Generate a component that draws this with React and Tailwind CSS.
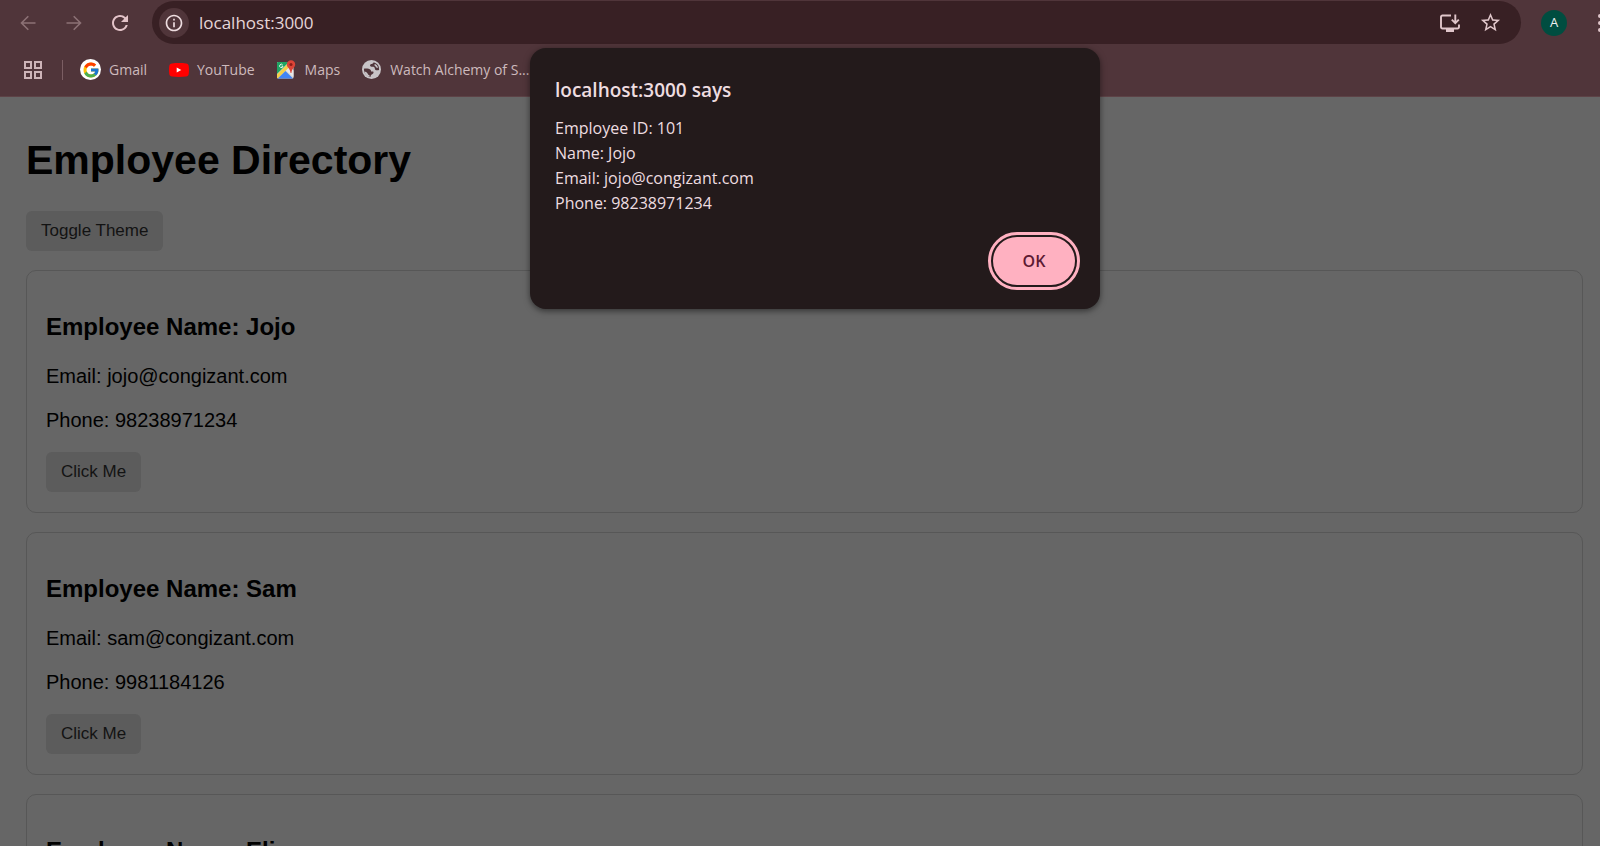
import React from "react";
import { MdInfoOutline, MdOutlineGridView, MdRefresh, MdStarBorder } from "react-icons/md";
import { FcGoogle } from "react-icons/fc";

const employees = [
  { name: "Jojo", email: "jojo@congizant.com", phone: "98238971234" },
  { name: "Sam", email: "sam@congizant.com", phone: "9981184126" },
  { name: "Eli" },
];

function Arrow({ flip }) {
  return (
    <svg
      viewBox="0 0 16 16"
      className={flip ? "size-4 rotate-180" : "size-4"}
      fill="none"
      stroke="currentColor"
      strokeWidth="1.6"
    >
      <path d="M15.5 8H1.8M8.300 1.200 1.500 8l6.800 6.800" />
    </svg>
  );
}

function InstallIcon() {
  return (
    <svg viewBox="0 0 20 18" className="h-[18px] w-5" fill="none" stroke="currentColor" strokeWidth="1.9">
      <path d="M11 1.500H2.400A1.400 1.400 0 0 0 1 2.900v10.200a1.400 1.400 0 0 0 1.400 1.400h15.200a1.400 1.400 0 0 0 1.400-1.400v-2.600" />
      <path d="M15.300.5v8.300M11.800 5.600l3.500 3.500 3.500-3.500" />
      <path d="M6 15h8v3H6z" fill="currentColor" stroke="none" />
    </svg>
  );
}

function GlobeIcon() {
  return (
    <svg viewBox="0 0 20 20" className="size-[19px] shrink-0">
      <circle cx="10" cy="10" r="10" fill="#c8c4c7" />
      <path
        fill="#50353a"
        d="M2 9.200c1.600-.5 3.500-.2 5 .1 1.800.4 2.500 1.600 2.600 2.900h1.600c.8 0 1 .6.9 1.300-.2 1.400-1.600 1.600-2.600 2.300-.5.5-.2 1.600-.7 2A8 8 0 0 1 2 9.200Z"
      />
      <path fill="#c8c4c7" d="M2.300 12c2 .2 3.200 1 3.700 2.400.3 1 .9 1.300 2 1.600l-.3 1.500A7.800 7.800 0 0 1 2.300 12Z" />
      <path
        fill="#50353a"
        d="M12.300 2.300c-.2 1.400-1.500 1.600-2.700 2-1.300.6-1.600 2-.3 2.500 1.500.5 2.800-.3 3.700.9.800 1.200.3 2.600 1.800 3.100 1.100.3 2.100-.1 3.200-.2A8 8 0 0 0 12.300 2.300Z"
      />
      <path fill="#c8c4c7" d="M13.800 4.200c1.700.8 2.700 2.200 3 4-1 .3-1.800.1-2.300-1-.5-1-1-1.600-1.800-1.900z" />
    </svg>
  );
}

function YouTubeIcon() {
  return (
    <svg viewBox="0 0 20 14" className="h-[14px] w-5">
      <path
        fill="#f00"
        d="M3 .4C7 0 13 0 17 .4c1.700.2 2.500 1 2.700 2.600.4 2.700.4 5.300 0 8-.2 1.600-1 2.400-2.700 2.600-4 .4-10 .4-14 0C1.300 13.400.5 12.600.3 11c-.4-2.700-.4-5.300 0-8C.5 1.400 1.300.6 3 .4Z"
      />
      <path fill="#fff" d="M7.700 4.500v5L12.300 7z" />
    </svg>
  );
}

function MapsIcon() {
  return (
    <svg viewBox="0 0 20 20" className="size-5">
      <rect x="1" y="2" width="16.500" height="16.500" rx="1" fill="#d8d8d8" />
      <path fill="#1fa463" d="M2 2h11L1 14V3a1 1 0 0 1 1-1Z" />
      <path fill="#f4d04a" d="M1 14.500 12.500 3l1.500 3.500L2.200 18.300A1.200 1.200 0 0 1 1 17z" />
      <path fill="#e8e8e8" d="m10 10.500 4-4 3.500 4V17z" />
      <path fill="#4285f4" d="m9.500 11 7.300 7.200a1.500 1.500 0 0 1-.8.300H2.500L2 18.300z" />
      <path
        fill="none"
        stroke="#e8f5e9"
        strokeWidth="1"
        d="M6.600 4.800a1.700 1.700 0 1 0 .4 1.400H5.500"
      />
      <path
        fill="#db4437"
        d="M15 .3a4.200 4.200 0 0 0-4.200 4.200c0 2.900 3.300 3.700 3.800 8.500h.8c.5-4.800 3.800-5.600 3.800-8.500A4.200 4.200 0 0 0 15 .3Z"
      />
      <circle cx="15" cy="4.500" r="1.500" fill="#8c1d18" />
    </svg>
  );
}

function Bookmark({ icon, children }) {
  return (
    <a href="#" className="flex shrink-0 items-center gap-2 text-sm leading-5 text-[#cdbabd]">
      <span className="flex w-[21px] justify-center">{icon}</span>
      {children}
    </a>
  );
}

function BrowserHeader() {
  return (
    <header className="shrink-0 overflow-hidden border-b border-[#5d4246] bg-[#50353a] font-['Open_Sans',sans-serif]">
      <div className="flex h-[45px] items-center pt-px pb-px">
        <nav className="flex shrink-0 items-center gap-[30px] pr-6 pl-5 text-[#8c7175]">
          <button aria-label="Back">
            <Arrow />
          </button>
          <button aria-label="Forward">
            <Arrow flip />
          </button>
          <button aria-label="Reload" className="-mx-1 text-[#e3c3c8]">
            <MdRefresh className="size-6" />
          </button>
        </nav>
        <div className="flex h-[43px] min-w-0 flex-1 items-center rounded-full bg-[#382024] pr-[19px] pl-[7px] text-[#e0c6ca]">
          <button
            aria-label="Site information"
            className="flex size-[30px] shrink-0 items-center justify-center rounded-full bg-[#50353a]"
          >
            <MdInfoOutline className="size-5 text-[#eedde0]" />
          </button>
          <input
            aria-label="Address"
            defaultValue="localhost:3000"
            className="ml-[10px] min-w-0 flex-1 bg-transparent text-[17px] text-[#e6d6d8] outline-none"
          />
          <div className="flex items-center gap-[19px]">
            <button aria-label="Install app">
              <InstallIcon />
            </button>
            <button aria-label="Bookmark this page">
              <MdStarBorder className="size-[23px]" />
            </button>
          </div>
        </div>
        <button
          aria-label="Profile"
          className="mr-[31px] ml-5 flex size-[26px] shrink-0 items-center justify-center rounded-full bg-[#004d40] text-[13px] text-[#f0f0f0]"
        >
          A
        </button>
        <button aria-label="Menu" className="w-[2px] shrink-0 overflow-hidden text-[#e0c6ca]">
          <svg viewBox="0 0 4 20" className="h-5 w-1" fill="currentColor">
            <circle cx="2" cy="3" r="2" />
            <circle cx="2" cy="10" r="2" />
            <circle cx="2" cy="17" r="2" />
          </svg>
        </button>
      </div>
      <div className="flex h-[51px] items-center pb-[2px] pl-[21px]">
        <button aria-label="All bookmarks" className="shrink-0 text-[#cdb4b8]">
          <MdOutlineGridView className="size-6" />
        </button>
        <span className="mx-[17px] h-5 w-px shrink-0 bg-[#7b5e63]" />
        <div className="flex items-center gap-[21px]">
          <Bookmark
            icon={
              <span className="flex size-[21px] items-center justify-center rounded-full bg-white">
                <FcGoogle className="size-[18px]" />
              </span>
            }
          >
            Gmail
          </Bookmark>
          <Bookmark icon={<YouTubeIcon />}>YouTube</Bookmark>
          <Bookmark icon={<MapsIcon />}>Maps</Bookmark>
          <Bookmark icon={<GlobeIcon />}>Watch Alchemy of S...</Bookmark>
        </div>
      </div>
    </header>
  );
}

function PageButton({ children }) {
  return (
    <button className="h-10 rounded-md bg-[#5c5c5c] px-[15px] text-[17px] text-[#131313]">
      {children}
    </button>
  );
}

function EmployeeCard({ employee }) {
  return (
    <article className="rounded-[10px] border border-[#575757] px-[19px] py-5">
      <h3 className="mt-[22px] text-2xl leading-7 font-bold">Employee Name: {employee.name}</h3>
      {employee.email && (
        <>
          <p className="mt-[23px] mb-5 text-xl leading-6">Email: {employee.email}</p>
          <p className="mb-5 text-xl leading-6">Phone: {employee.phone}</p>
          <PageButton>Click Me</PageButton>
        </>
      )}
    </article>
  );
}

function AlertDialog() {
  return (
    <div
      role="alertdialog"
      aria-labelledby="alert-title"
      aria-describedby="alert-text"
      className="absolute top-12 left-[calc(50%+15px)] w-[570px] -translate-x-1/2 rounded-2xl bg-[#231a1b] px-[25px] pt-7 pb-6 font-['Open_Sans',sans-serif] text-[#eedde0] shadow-[0_2px_6px_rgba(0,0,0,0.5)]"
    >
      <h2 id="alert-title" className="text-[19px] leading-7 font-semibold">
        localhost:3000 says
      </h2>
      <div id="alert-text" className="mt-3 text-base leading-[25px]">
        <p>Employee ID: 101</p>
        <p>Name: Jojo</p>
        <p>Email: jojo@congizant.com</p>
        <p>Phone: 98238971234</p>
      </div>
      <div className="mt-[21px] flex justify-end">
        <button className="h-12 w-[82px] rounded-full bg-[#ffb1c1] text-base font-semibold text-[#5c1a33] outline-3 outline-offset-2 outline-[#ffb1c1]">
          OK
        </button>
      </div>
    </div>
  );
}

export default function App() {
  return (
    <div className="relative flex h-screen flex-col overflow-hidden bg-[#666666]">
      <BrowserHeader />
      <main className="min-h-0 flex-1 overflow-hidden pt-[39px] pr-[17px] pl-[26px] font-['Liberation_Sans',Arial,sans-serif] text-black">
        <h1 className="text-[41px] leading-[48px] font-bold">Employee Directory</h1>
        <div className="mt-[27px] mb-[19px] flex">
          <PageButton>Toggle Theme</PageButton>
        </div>
        <div className="flex flex-col gap-[19px]">
          {employees.map((employee) => (
            <EmployeeCard key={employee.name} employee={employee} />
          ))}
        </div>
      </main>
      <AlertDialog />
    </div>
  );
}
